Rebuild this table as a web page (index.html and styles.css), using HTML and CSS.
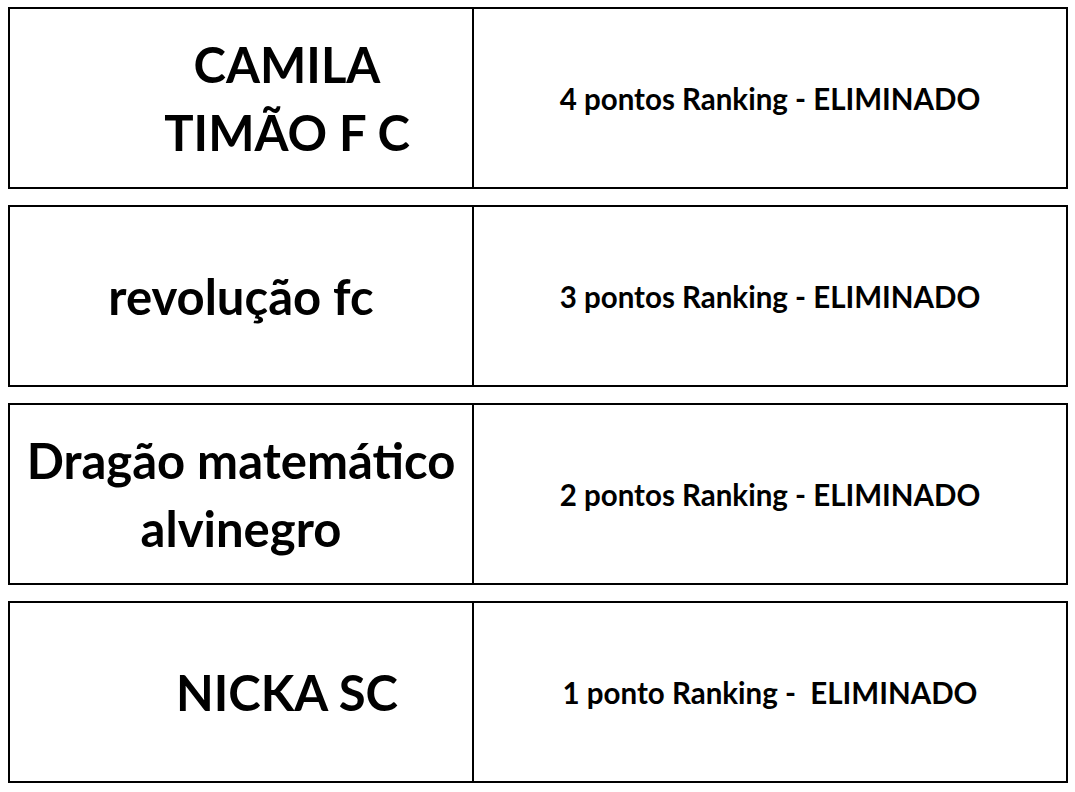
FILE: index.html
```html
<!DOCTYPE html>
<html lang="pt-BR">
<head>
<meta charset="utf-8">
<title>Ranking</title>
<link rel="stylesheet" href="styles.css">
</head>
<body>
<main class="list">
  <section class="row">
    <div class="name indent">CAMILA<br>TIMÃO F C</div>
    <div class="result">4 pontos Ranking - ELIMINADO</div>
  </section>
  <section class="row">
    <div class="name">revolução fc</div>
    <div class="result">3 pontos Ranking - ELIMINADO</div>
  </section>
  <section class="row">
    <div class="name">Dragão matemático<br>alvinegro</div>
    <div class="result">2 pontos Ranking - ELIMINADO</div>
  </section>
  <section class="row">
    <div class="name indent">NICKA SC</div>
    <div class="result">1 ponto Ranking -&nbsp; ELIMINADO</div>
  </section>
</main>
</body>
</html>
```

FILE: styles.css
```css
html, body {
  margin: 0;
  padding: 0;
  background: #ffffff;
}

body {
  font-family: Lato, "Open Sans", sans-serif;
  font-weight: 700;
  color: #000000;
}

.list {
  display: flex;
  flex-direction: column;
  gap: 16px;
  padding: 7px 0 0 8px;
}

.row {
  box-sizing: border-box;
  width: 1060px;
  height: 182px;
  border: 2px solid #000000;
  display: flex;
}

.name {
  box-sizing: border-box;
  width: 464px;
  border-right: 2px solid #000000;
  display: flex;
  align-items: center;
  justify-content: center;
  text-align: center;
  font-size: 49px;
  line-height: 68px;
}

.name.indent {
  padding-left: 92px;
}

.result {
  flex: 1;
  display: flex;
  align-items: center;
  justify-content: center;
  font-size: 29.5px;
}
```
